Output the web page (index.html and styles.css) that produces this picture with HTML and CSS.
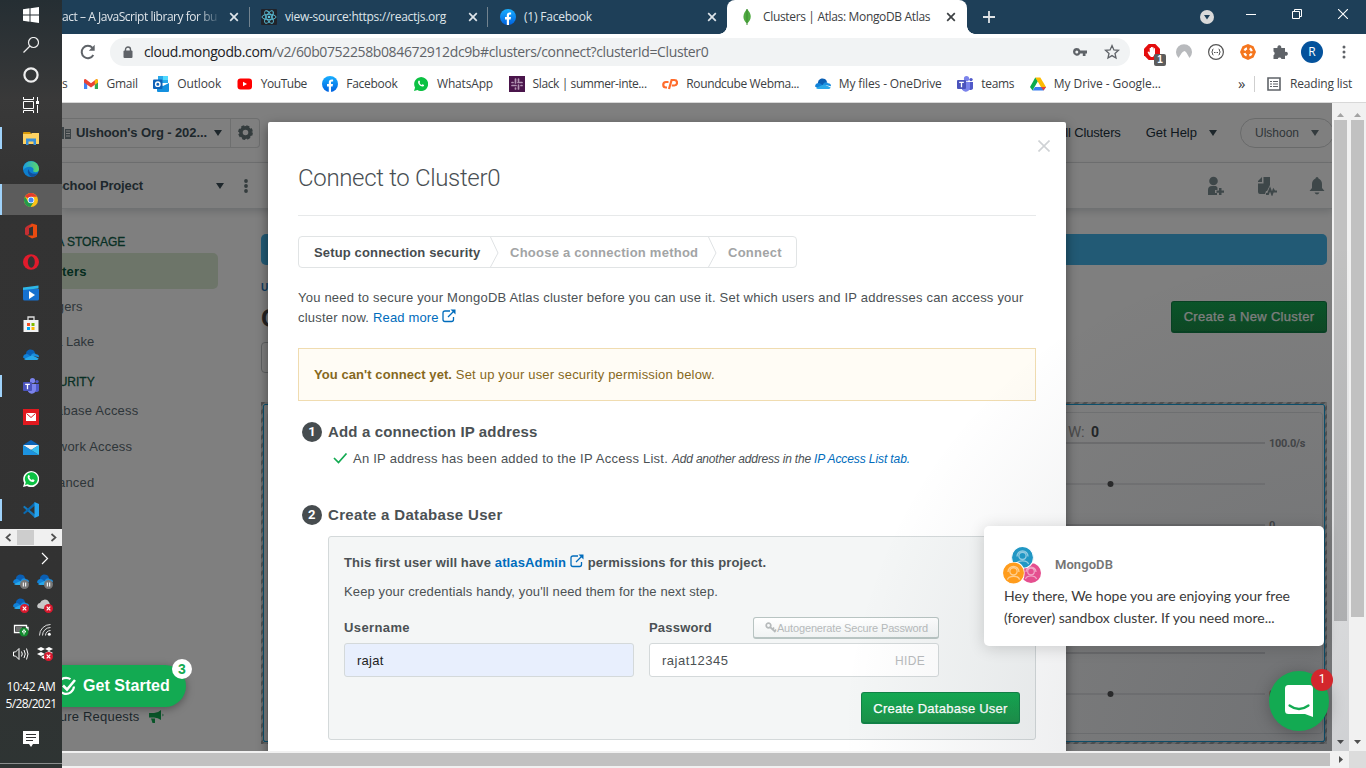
FILE: index.html
```html
<!DOCTYPE html>
<html lang="en">
<head>
<meta charset="utf-8">
<title>Clusters | Atlas: MongoDB Atlas</title>
<link rel="stylesheet" href="styles.css">
</head>
<body>
<svg class="defs" aria-hidden="true">
  <defs>
    <linearGradient id="edgeG" x1="0" y1="0" x2="1" y2="0"><stop offset="0" stop-color="#1b9de2"/><stop offset="1" stop-color="#5fdc62"/></linearGradient>
    <linearGradient id="fbG" x1="0" y1="0" x2="0" y2="1"><stop offset="0" stop-color="#19afff"/><stop offset="1" stop-color="#0062e0"/></linearGradient>
    <symbol id="fb" viewBox="0 0 16 16"><circle cx="8" cy="8" r="8" fill="url(#fbG)"/><path d="M6.8 16v-5.6H5V8h1.8V6.400c0-2 1-3 2.900-3h1.400v2.100h-1c-.8 0-1.100.4-1.100 1.100V8H11l-.4 2.400H9V16z" fill="#fff"/></symbol>
    <symbol id="x" viewBox="0 0 10 10"><path d="M1.200 1.200l7.600 7.600M8.800 1.200L1.200 8.800" stroke="currentColor" stroke-width="1.700" fill="none"/></symbol>
    <symbol id="cloud" viewBox="0 0 16 16"><path d="M3 8A4.600 4.600 0 0 1 12 6l-3 5z" fill="#0a5fb4"/><path d="M0 10.500a3.500 3.500 0 0 1 5-3.200L11 12H2.500z" fill="#1181d8"/><path d="M8 8.500C9 6 12 5.500 13 7.300a2.900 2.900 0 0 1 3 3z" fill="#1a8ee0"/><path d="M1 12L9 8.300l6.700 3.200c-.5 1.300-1.500 1.500-2.700 1.500H3.500A3 3 0 0 1 1 12z" fill="#28a8ea"/></symbol>
    <symbol id="wa" viewBox="0 0 16 16"><path d="M0 16l1.200-4A8 8 0 1 1 4 14.900z" fill="var(--ring,#0cc143)"/><path d="M2 14l.8-2.700A6.500 6.500 0 1 1 4.800 13.300z" fill="#0cc143"/><path d="M5.300 4.200c.5-.4 1-.1 1.200.4l.4 1c.1.500-.6.9-.5 1.200.5 1 1.300 1.700 2.400 2.200.4.1.7-.8 1.200-.7l1.400.7c.4.2-.1 1.400-.7 1.700-1.500.8-3.700-.6-4.700-1.800C4.700 7.400 4.100 5.200 5.300 4.200z" fill="#fff"/></symbol>
    <symbol id="teams" viewBox="0 0 16 16"><circle cx="9.500" cy="2.700" r="2.600" fill="#7b83eb"/><circle cx="14" cy="3.600" r="1.700" fill="#5059c9"/><path d="M11 6h5v5a2.500 2.500 0 0 1-5 1z" fill="#5059c9"/><path d="M5 6h8v5.500a4.300 4.300 0 0 1-8 2z" fill="#7b83eb"/><rect y="4" width="9" height="9" rx="1" fill="#4b53bc"/><path d="M2.200 6.300h4.600M4.500 6.300v5" stroke="#fff" stroke-width="1.300"/></symbol>
    <symbol id="ext" viewBox="0 0 14 14"><path d="M8 2H3Q1 2 1 4v6.500q0 2 2 2h6.500q2 0 2-2V8M6 8l6-6" fill="none" stroke="currentColor" stroke-width="1.300"/><path d="M8.500.5h5v5z" fill="currentColor"/></symbol>
    <symbol id="pause" viewBox="0 0 10 10"><circle cx="5" cy="5" r="5" fill="#777"/><path d="M3.700 2.800v4.400M6.300 2.800v4.400" stroke="#fff" stroke-width="1.200"/></symbol>
    <symbol id="err" viewBox="0 0 10 10"><circle cx="5" cy="5" r="5" fill="#d9182d"/><path d="M3 3l4 4M7 3L3 7" stroke="#fff" stroke-width="1.300"/></symbol>
    <symbol id="man" viewBox="0 0 20 20"><circle cx="10" cy="10" r="10"/><circle cx="10" cy="8.500" r="3.300" fill="none" stroke="#fff" stroke-opacity=".5" stroke-width="1.200"/><path d="M5 9a5 5 0 0 1 10 0M4.500 16c1-4 10-4 11 0" fill="none" stroke="#fff" stroke-opacity=".5" stroke-width="1.200"/></symbol>
    <pattern id="hatch" width="6" height="6" patternUnits="userSpaceOnUse" patternTransform="rotate(45)"><rect width="6" height="6" fill="#d8d8d8"/><rect width="3" height="6" fill="#a2a2a2"/></pattern>
  </defs>
</svg>
<div class="screen">
  <aside class="taskbar">
    <div class="sys">
      <span><svg width="16" height="16"><path d="M0 2.300L6.500 1.300v6.200H0zM7.500 1.200L16 0v7.500H7.500zM0 8.500h6.500v6.200L0 13.700zM7.500 8.500H16V16l-8.500-1.200z" fill="#fff"/></svg></span>
      <span><svg width="16" height="16"><circle cx="10.500" cy="5.500" r="5" fill="none" stroke="#eee" stroke-width="1.200"/><path d="M7 9L.5 15.500" stroke="#eee" stroke-width="1.300"/></svg></span>
      <span><svg width="16" height="16"><circle cx="8" cy="8" r="6.600" fill="none" stroke="#eee" stroke-width="2.200"/></svg></span>
      <span><svg width="16" height="16"><path d="M.5 0v2.500h10V0M.5 16v-2.500h10V16M.5 4.500h10v7H.5zM14.500 0v4M14.500 8v8" fill="none" stroke="#fff"/><path d="M13 4h3v3h-3z" fill="#fff"/></svg></span>
    </div>
    <div class="apps">
      <span class="open"><svg width="16" height="16"><path d="M0 3q0-1 1-1h6l1.500 2H0z" fill="#d99a0b"/><path d="M0 4h8l1-1h7v11H0z" fill="#fdd263"/><path d="M3 8.500h10V15h-2.500v-3.500h-5V15H3z" fill="#3a8fd9"/></svg></span>
      <span><svg width="16" height="16"><circle cx="8" cy="8" r="8" fill="#0d7fcf"/><path d="M.3 6A8 8 0 0 1 16 8c0 4-5.500 3.600-6 2 1-1 .8-3.600-2-4.100C5 5.500 2 6.500.3 9z" fill="url(#edgeG)"/><path d="M5.600 8C3.500 11 6 15 9 15.900c3-.4 5-2 6-4-4 2-9 .5-9.400-3.900z" fill="#11509c"/></svg></span>
      <span class="open active"><svg width="14" height="14"><circle cx="7" cy="7" r="7" fill="#fbc116"/><path d="M7 7L1 3.400A7 7 0 0 1 13.100 3.800H7z" fill="#e33b2e"/><path d="M.9 3.500A7 7 0 0 0 6.500 14L10 8.600 7 7 4 8.600z" fill="#249a4b"/><circle cx="7" cy="7" r="3.300" fill="#fff"/><circle cx="7" cy="7" r="2.500" fill="#4285f4"/></svg></span>
      <span><svg width="14" height="16"><path d="M3 3l5-2.500v3.300L5 5v6l-2 1.500L1 11.500V5z" fill="#c52e32"/><path d="M8 .5l5 1.500v12l-5 1.500-5-3h6V3.600L5 4.500z" fill="#ea4b10"/></svg></span>
      <span><svg width="16" height="16"><ellipse cx="8" cy="8" rx="8" ry="7.800" fill="#e11b2c"/><ellipse cx="8.300" cy="8" rx="3.500" ry="5.700" fill="#343434"/></svg></span>
      <span><svg width="16" height="16"><path d="M0 4h16v10q0 1.500-1.500 1.500h-13Q0 15.500 0 14z" fill="#1670cf"/><path d="M0 2.500L15.500.5v3L0 5z" fill="#2eb7e8"/><path d="M6 6l6 4-6 4z" fill="#fff"/></svg></span>
      <span><svg width="16" height="16"><path d="M5 4V1h6v3" stroke="#ddd" fill="none" stroke-width="1.300"/><path d="M.5 4h15v12H.5z" fill="#f2f2f2"/><path d="M4 7h3v3H4z" fill="#f25022"/><path d="M8.500 7h3v3h-3z" fill="#7fba00"/><path d="M4 11h3v3H4z" fill="#00a4ef"/><path d="M8.500 11h3v3h-3z" fill="#ffb900"/></svg></span>
      <span><svg width="16" height="16"><use href="#cloud"/></svg></span>
      <span class="open"><svg width="16" height="16"><use href="#teams"/></svg></span>
      <span><svg width="16" height="16"><path d="M0 0h16v16H0z" fill="#e1191f"/><path d="M3 4h10v8H3z" fill="#fff"/><path d="M3.500 4.500L8 8.500l4.500-4" stroke="#e1191f" fill="none"/></svg></span>
      <span><svg width="16" height="16"><path d="M0 5l8-5 8 5v4H0z" fill="#0a62b5"/><path d="M0 5h16L8 10z" fill="#f3f3f3"/><path d="M0 5l16 10H0z" fill="#1c93e0"/><path d="M16 5v10L8 10z" fill="#38bff0"/></svg></span>
      <span><svg width="16" height="16" class="ringed"><use href="#wa"/></svg></span>
      <span class="open"><svg width="16" height="16"><path d="M0 5l1.500-1.200L12 12.500V16z" fill="#1379bd"/><path d="M0 11l1.500 1.200L12 3.500V0z" fill="#0a69b0"/><path d="M11.500 0L16 2v12l-4.500 2z" fill="#27a4ee"/></svg></span>
    </div>
    <div class="tscroll"><svg width="62" height="17"><path d="M17 1h17v15H17z" fill="#cdcdcd"/><path d="M10.500 5L6.500 8.500l4 3.500M51.500 5l4 3.500-4 3.500" fill="none" stroke="#505050" stroke-width="1.700"/></svg></div>
    <div class="tray">
      <i></i><span><svg width="16" height="16"><path d="M5 3l5.500 5.500L5 14" fill="none" stroke="#fff" stroke-width="1.200"/></svg></span>
      <span><svg width="16" height="16"><use href="#cloud" y="-2" width="16" height="16"/><use href="#pause" x="7" y="6" width="9" height="9"/></svg></span>
      <span><svg width="16" height="16"><use href="#cloud" y="-2" width="16" height="16"/><use href="#pause" x="7" y="6" width="9" height="9"/></svg></span>
      <span><svg width="16" height="16"><use href="#cloud" y="-2" width="16" height="16"/><use href="#err" x="7" y="6" width="9" height="9"/></svg></span>
      <span><svg width="16" height="16"><path d="M1 10a3 3 0 0 1 2-5 5 5 0 0 1 9-1l2 5-8 2z" fill="#c8c8c8"/><use href="#err" x="7" y="6" width="9" height="9"/></svg></span>
      <span><svg width="16" height="16"><path d="M1.500 3.500h12v7h-12zM14 5.500h1v3" fill="none" stroke="#fff" stroke-width="1.300"/><path d="M3 5h6v4H3z" fill="#fff" fill-opacity=".3"/><circle cx="11" cy="10" r="4.500" fill="#138a2e"/><path d="M11 12.500v-2M11 7.500l1.800 2.500h-3.600z" stroke="#fff" fill="none"/></svg></span>
      <span><svg width="16" height="16"><path d="M2.500 13.500A11 11 0 0 1 13.500 2.500M5.500 13.500A8 8 0 0 1 13.500 5.500M8.500 13.500a5 5 0 0 1 5-5" fill="none" stroke="#ddd"/><circle cx="12.300" cy="12.300" r="1.500" fill="#fff"/></svg></span>
      <span><svg width="16" height="16"><path d="M.5 6h2L6 2.500v11L2.500 10h-2zM8.500 5.500q1.500 2.500 0 5M11 4q2.500 4 0 8M13.500 2.500q3 5.500 0 11" fill="none" stroke="#fff"/></svg></span>
      <span><svg width="16" height="16"><path d="M4 1l4 2-4 2-4-2zM12 1l4 2-4 2-4-2zM4 6l4 2-4 2-4-2zM12 5l4 2-4 2-4-2zM4 11l4-2 2 2-3 2z" fill="#fff"/><use href="#err" x="7" y="6" width="9" height="9"/></svg></span>
    </div>
    <div class="clock"><span class="time">10:42 AM</span><span class="date">5/28/2021</span></div>
    <div class="notify"><svg width="16" height="16"><path d="M0 0h16v13h-6l-2 3-2-3H0z" fill="#fff"/><path d="M3 3.500h10M3 6.500h10M3 9.500h7" stroke="#333"/></svg></div>
  </aside>

  <main class="browser">
    <div class="tabs">
      <div class="tab first"><span class="tt t1">act – A JavaScript library for bu</span><svg width="10" height="10"><use href="#x"/></svg></div>
      <div class="tab"><svg width="16" height="16"><rect width="16" height="16" rx="1" fill="#20232a"/><g fill="none" stroke="#5cc3dc" stroke-width=".9"><ellipse cx="8" cy="8" rx="7" ry="2.700"/><ellipse cx="8" cy="8" rx="7" ry="2.700" transform="rotate(60 8 8)"/><ellipse cx="8" cy="8" rx="7" ry="2.700" transform="rotate(120 8 8)"/></g><circle cx="8" cy="8" r="1.300" fill="#5cc3dc"/></svg><span class="tt t2">view-source:https://reactjs.org</span><svg width="10" height="10"><use href="#x"/></svg></div>
      <div class="tab"><svg width="16" height="16"><use href="#fb"/></svg><span class="tt t3">(1) Facebook</span><svg width="10" height="10"><use href="#x"/></svg></div>
      <div class="tab current"><svg width="16" height="16"><path d="M8 0c5 5 5 10.500 0 14.500C3 10.500 3.500 5 8 0z" fill="#4faa41"/><path d="M8 0v16" stroke="#3d8c33"/></svg><span class="tt t4">Clusters | Atlas: MongoDB Atlas</span><svg width="10" height="10"><use href="#x"/></svg></div>
      <div class="plus"><svg width="12" height="12"><path d="M6 0v12M0 6h12" stroke="#dfe3e6" stroke-width="1.800"/></svg></div>
      <div class="win">
        <svg width="14" height="14"><circle cx="7" cy="7" r="7" fill="#dadada"/><path d="M4 5h6l-3 4.500z" fill="#1e3f58"/></svg>
        <svg class="w1" width="10" height="10"><path d="M0 4.500h10" stroke="#fff"/></svg>
        <svg class="w2" width="10" height="10"><path d="M.5 2.500h7v7h-7zM2.500 2.500v-2h7v7h-2" fill="none" stroke="#fff"/></svg>
        <svg class="w3" width="10" height="10"><path d="M0 0l10 10M10 0L0 10" stroke="#fff" stroke-width="1.100"/></svg>
      </div>
    </div>
    <div class="toolbar">
      <svg class="reload" width="16" height="16"><path d="M13.300 11A6.200 6.200 0 1 1 12.500 3.800" fill="none" stroke="#5f6368" stroke-width="2"/><path d="M14.700.8v6H8.800z" fill="#5f6368"/></svg>
      <div class="omni">
        <svg width="10" height="13"><path d="M2.500 5V3.500a2.500 2.500 0 0 1 5 0V5" fill="none" stroke="#5f6368" stroke-width="1.400"/><rect x=".5" y="4.500" width="9" height="7.500" rx="1" fill="#5f6368"/></svg>
        <span class="url"><b>cloud.mongodb.com</b>/v2/60b0752258b084672912dc9b#clusters/connect?clusterId=Cluster0</span>
        <span class="cell"><svg width="14" height="8"><path d="M3.800 0a3.800 3.800 0 0 1 3.500 2.400H14v3h-1.500V8H9.800V5.400H7.300A3.800 3.800 0 1 1 3.800 0zm0 2.400a1.500 1.500 0 1 0 0 3 1.500 1.500 0 0 0 0-3z" fill="#5f6368" fill-rule="evenodd"/></svg></span>
        <span class="cell"><svg width="16" height="16"><path d="M8 1.600l1.900 4.300 4.600.4-3.500 3.100 1 4.600L8 11.600 4 14l1-4.600L1.500 6.300l4.600-.4z" fill="none" stroke="#5f6368" stroke-width="1.300"/></svg></span>
      </div>
      <div class="exts">
        <span class="cell ad"><svg width="16" height="16"><path d="M4.700 0h6.600L16 4.700v6.600L11.300 16H4.700L0 11.300V4.700z" fill="#e40d0d"/><path d="M5 11L3.500 8l1-.5 1.200 1V4h1.200v3V3h1.300v4V3.200h1.300V7l.3-2.800h1.200V10l-2 3H7z" fill="#fff"/></svg><em>1</em></span>
        <span class="cell"><svg width="16" height="16"><path d="M2.500 14A8 8 0 1 1 13.500 14L10.500 8.800 8.800 7 7 7.800 5.700 9z" fill="#b8babd"/></svg></span>
        <span class="cell"><svg width="16" height="16"><circle cx="8" cy="8" r="7.400" fill="none" stroke="#555" stroke-width="1.200"/><path d="M5.500 5Q4 5 4.500 7L3.700 8l.8 1Q4 11 5.500 11M10.500 5q1.500 0 1 2l.8 1-.8 1q.5 2-1 2" fill="none" stroke="#555"/><path d="M6 8.500h1M7.500 8.500h1M9 8.500h1" stroke="#555"/></svg></span>
        <span class="cell"><svg width="16" height="16"><path d="M8 0l5.500 2.200L16 8l-2.500 5.500L8 16l-5.500-2.500L0 8l2.500-5.800z" fill="#f5761e"/><circle cx="8" cy="8" r="3.800" fill="none" stroke="#fff" stroke-width="2.200" stroke-dasharray="3.200 2.768" transform="rotate(20 8 8)"/></svg></span>
        <span class="cell"><svg width="16" height="16"><path d="M1.500 4h4a2 2 0 1 1 3.700 0H13v4a2 2 0 1 1 0 3.600V15H9.500a2 2 0 0 0-3.800 0H1.500v-3.800a2 2 0 0 0 0-3.600z" fill="#5f6368"/></svg></span>
        <span class="cell"><i class="avatar">R</i></span>
        <span class="cell"><svg width="4" height="14"><g fill="#5f6368"><circle cx="2" cy="2" r="1.500"/><circle cx="2" cy="7" r="1.500"/><circle cx="2" cy="12" r="1.500"/></g></svg></span>
      </div>
    </div>
    <div class="bookmarks">
      <span class="bm b0">s</span>
      <span class="bm b1"><svg width="16" height="16"><path d="M1 4.500V13h3.200V8z" fill="#4285f4"/><path d="M15 4.500V13h-3.200V8z" fill="#34a853"/><path d="M1 3.500L2.500 3 8 7.300 13.500 3 15 4v2.500L8 11.500 1 6.500z" fill="#ea4335"/><path d="M11.800 4.300L13.500 3 15 4v2.500l-3.200 2.300z" fill="#fbbc04"/></svg>Gmail</span>
      <span class="bm b2"><svg width="16" height="16"><path d="M5 0h10v7H5z" fill="#28a8ea"/><path d="M10 0h5v4h-5z" fill="#50d9ff"/><path d="M4 7l6 3 6-3v8q0 1-1 1H5q-1 0-1-1z" fill="#1490df"/><rect y="3.500" width="9.500" height="9.500" rx="1" fill="#0f62b8"/><circle cx="4.800" cy="8.200" r="2.200" fill="none" stroke="#fff" stroke-width="1.400"/></svg>Outlook</span>
      <span class="bm b3"><svg width="16" height="16"><rect x=".5" y="2.500" width="14.500" height="11" rx="3" fill="#f00"/><path d="M6 5.700v4.600L10 8z" fill="#fff"/></svg>YouTube</span>
      <span class="bm b4"><svg width="16" height="16"><use href="#fb"/></svg>Facebook</span>
      <span class="bm b5"><svg width="14" height="14" class="wide"><use href="#wa"/></svg>WhatsApp</span>
      <span class="bm b6"><svg width="16" height="16"><path d="M0 0h16v16H0z" fill="#4a154b"/><g stroke="#b295b3" stroke-width="1.700" stroke-linecap="round"><path d="M6.500 3v4M9.500 9v4M9 6.500h4M3 9.500h4M9.500 3v2M6.500 12v1M3 6.500h1M12 9.500h1"/></g></svg>Slack | summer-inte...</span>
      <span class="bm b7"><svg width="16" height="16"><path d="M6.500 6H4a2.700 2.700 0 0 0 0 5.500h1M7 13l2.600-9h2.700a2.700 2.700 0 0 1 0 5.500H9.800" fill="none" stroke="#ff6c2c" stroke-width="2.200"/></svg>Roundcube Webma...</span>
      <span class="bm b8"><svg width="16" height="16"><use href="#cloud"/></svg>My files - OneDrive</span>
      <span class="bm b9"><svg width="16" height="16"><use href="#teams"/></svg>teams</span>
      <span class="bm b10"><svg width="16" height="16"><path d="M5.300 1.500L0 11l2.500 3.500L8 5z" fill="#0aab4b"/><path d="M5.300 1.500h5L16 11h-5z" fill="#fdbc02"/><path d="M5 11h11l-2.500 3.500h-11z" fill="#3a7ef0"/><path d="M11 11h5l-2.500 3.500z" fill="#ea4335"/></svg>My Drive - Google...</span>
      <span class="more">»</span>
      <span class="bm reading"><svg width="14" height="14"><path d="M1 1h12v12H1z" fill="none" stroke="#5f6368" stroke-width="1.600"/><path d="M3 4.500h2M6 4.500h5M3 7h2M6 7h5M3 9.500h2M6 9.500h5" stroke="#5f6368" stroke-width="1.200"/></svg>Reading list</span>
    </div>

    <div class="view">
      <div class="page">
        <div class="nav">
          <div class="org"><svg class="bld" width="11" height="13"><path d="M0 1h4v12H0zM5 3h6v10H5z" fill="#76848a"/><path d="M6 5h4M6 7.500h4M6 10h4" stroke="#fff"/></svg><b class="orgname">Ulshoon's Org - 202...</b><i class="tri"></i></div>
          <div class="gear"><svg width="15" height="15"><circle cx="7.500" cy="7.500" r="4.600" fill="none" stroke="#68787b" stroke-width="3.600"/><circle cx="7.500" cy="7.500" r="6.500" fill="none" stroke="#68787b" stroke-width="1.800" stroke-dasharray="3.100 2.005"/></svg></div>
          <div class="navr"><span class="all">All Clusters</span><span class="help">Get Help</span><i class="tri"></i><span class="user">Ulshoon<i class="tri"></i></span></div>
        </div>
        <div class="project">
          <b>School Project</b><i class="tri"></i><svg class="kebab" width="4" height="14"><g fill="#68787b"><circle cx="2" cy="2" r="1.900"/><circle cx="2" cy="7" r="1.900"/><circle cx="2" cy="12" r="1.900"/></g></svg>
          <div class="acts">
            <svg width="18" height="20"><g fill="#7c8e92"><circle cx="6.500" cy="5" r="4.300"/><path d="M1 19v-5q0-4 4-4h4l1.500 1.500V14H8v3h2v2zM12 12h2.500v2.500H17v2.300h-2.500V19H12v-2.200H9.500v-2.300H12z"/></g></svg>
            <svg width="20" height="20"><g fill="#7c8e92"><path d="M1 5l4-4v5H1zM6.500 1H13v8l-3 6H9l-1 3H3q-2 0-2-2V7.500h5.500z"/></g><path d="M9 18h2l2-5 2 5 1.500-4 1 1.500H20" fill="none" stroke="#7c8e92" stroke-width="2"/></svg>
            <svg width="16" height="20"><path d="M8 1q1.500 0 1.500 1.500Q13 4 13 8v4l2.500 3H.5L3 12V8q0-4 3.500-5.500Q6.500 1 8 1zM5.500 16.500h5Q9.500 18.500 8 18.500t-2.500-2z" fill="#7c8e92"/></svg>
          </div>
        </div>
        <div class="body">
          <div class="side">
            <h5>DATA STORAGE</h5>
            <a class="on">Clusters</a><a>Triggers</a><a>Data Lake</a>
            <h5 class="sec">SECURITY</h5>
            <a>Database Access</a><a>Network Access</a><a>Advanced</a>
            <a class="req">Feature Requests<svg width="17" height="15"><path d="M1 4h5q4 0 7-3v10q-3-2.500-7-2.500H1zM3 9.500h4V14H4.500zM14.500 4.500q2 1.500 0 3z" fill="#13aa52"/></svg></a>
          </div>
          <div class="content">
            <div class="banner"></div>
            <div class="crumb">U</div>
            <div class="head"><h1>C</h1><button class="green new">Create a New Cluster</button></div>
            <div class="find"></div>
            <svg class="card" width="1066" height="342">
              <rect x="1" y="1" width="1064" height="340" fill="none" stroke="url(#hatch)" stroke-width="2"/>
              <rect x="2.500" y="2.500" width="1061" height="337" rx="2" fill="#fff" stroke="#16a2dc" stroke-width="1.100"/>
              <rect x="6.500" y="10.500" width="1055" height="321" rx="3" fill="none" stroke="#e2e4e6"/>
              <g stroke="#dcdddf" stroke-width="2"><path d="M300 41h704M300 123h704M300 251h704"/><path d="M300 82h704M300 292h704" stroke="#e8e8ea"/></g>
              <circle cx="849.500" cy="82" r="3" fill="#555"/><circle cx="849.500" cy="292" r="3" fill="#555"/>
              <g class="chart"><text x="807" y="34.500" class="w">W:</text><text x="830" y="34.500" class="wv">0</text><text x="1008" y="44.500">100.0/s</text><text x="1008" y="127">0</text><text x="1008" y="296">0</text></g>
            </svg>
          </div>
        </div>
        <div class="shade"></div>
        <section class="modal">
          <svg class="close" width="12" height="12"><path d="M.5.5l11 11M11.500.5l-11 11" stroke="#cfd2d5" stroke-width="1.600"/></svg>
          <h2>Connect to Cluster0</h2>
          <div class="steps"><span class="s1">Setup connection security</span><svg width="9" height="30"><path d="M.5 0l7.500 16-7.500 14" fill="none" stroke="#dfe2e4"/></svg><span class="s2">Choose a connection method</span><svg width="9" height="30"><path d="M.5 0l7.500 16-7.500 14" fill="none" stroke="#dfe2e4"/></svg><span class="s3">Connect</span></div>
          <p class="intro">You need to secure your MongoDB Atlas cluster before you can use it. Set which users and IP addresses can access your<br>cluster now. <a>Read more <svg width="14" height="14"><use href="#ext"/></svg></a></p>
          <div class="alert"><b>You can't connect yet.</b> Set up your user security permission below.</div>
          <h3 class="h1st"><i>1</i><span>Add a connection IP address</span></h3>
          <p class="done"><svg width="15" height="12"><path d="M1 5l4.500 4.500L13.500.5" fill="none" stroke="#13aa52" stroke-width="1.700"/></svg><span class="dtext">An IP address has been added to the IP Access List.</span><em>Add another address in the <a>IP Access List tab.</a></em></p>
          <h3 class="h2nd"><i>2</i><span>Create a Database User</span></h3>
          <div class="form">
            <p class="lead">This first user will have <a>atlasAdmin <svg width="14" height="14"><use href="#ext"/></svg></a> permissions for this project.</p>
            <p class="keep">Keep your credentials handy, you'll need them for the next step.</p>
            <div class="fields">
              <div class="field"><div class="lab"><b class="lu">Username</b></div><div class="input filled"><span class="v1">rajat</span></div></div>
              <div class="field"><div class="lab"><b class="lp">Password</b><button class="auto"><svg width="12" height="11"><g fill="none" stroke="#b6babb" stroke-width="1.700"><circle cx="3.500" cy="3.500" r="2.300"/><path d="M5 5l5.500 5M7.500 7.500l1.500-2M9.500 9.500l1.500-2"/></g></svg>Autogenerate Secure Password</button></div><div class="input"><span class="v2">rajat12345</span><span class="hide">HIDE</span></div></div>
            </div>
            <div class="submit"><button class="green create">Create Database User</button></div>
          </div>
        </section>
        <div class="started"><svg width="18" height="20"><path d="M12.500 3.200A8 8 0 1 0 16 10.500" fill="none" stroke="#fff" stroke-width="2.200"/><path d="M5 9.500l4 4 8-9.500" fill="none" stroke="#fff" stroke-width="2.600"/></svg>Get Started<i>3</i></div>
      </div>
      <div class="bars">
        <svg width="34" height="648"><path d="M0 0h34v648H0z" fill="#f1f1f1"/><path d="M2 17h13v501H2zM19 17h13v497H19z" fill="#c1c1c1"/><path d="M8.500 10l3.500 4H5zM25.500 10l3.500 4h-7z" fill="#a3a3a3"/><path d="M8.500 641L5 637h7zM25.500 641l-3.500-4h7z" fill="#505050"/></svg>
      </div>
    </div>
    <div class="hbar"><svg width="1304" height="17"><path d="M0 0h1287v17H0z" fill="#f1f1f1"/><path d="M0 2h1268v13H0z" fill="#c1c1c1"/><path d="M1281 8.500l-4-3.500v7z" fill="#505050"/><path d="M1287 0h17v17h-17z" fill="#dcdcdc"/></svg></div>
    <div class="haze"></div>
    <div class="chat">
      <div class="who"><svg width="38" height="38"><g fill="#e54f8f"><use href="#man" x="18" y="16" width="20" height="20"/></g><g fill="#2197c4" stroke="#fff" stroke-width="1"><use href="#man" x="8.500" y="-.5" width="22" height="22"/></g><g fill="#ff9c1c" stroke="#fff" stroke-width="1"><use href="#man" x="-.5" y="15" width="22" height="22"/></g></svg><b>MongoDB</b></div>
      <p><span class="c1">Hey there, We hope you are enjoying your free</span><br><span class="c2">(forever) sandbox cluster. If you need more...</span></p>
    </div>
    <div class="launch"><svg width="28" height="32"><path d="M3.500 0h21q3.500 0 3.500 3.500V32l-8-3H3.500Q0 29 0 25.500v-22Q0 0 3.500 0z" fill="#fff"/><path d="M4.500 20.500q9.500 7 19 0" fill="none" stroke="#13aa52" stroke-width="2.200" stroke-linecap="round"/></svg><i>1</i></div>
  </main>
</div>
</body>
</html>
```
FILE: styles.css
```css
*{box-sizing:border-box}
body{margin:0;width:1366px;height:768px;overflow:hidden;font:13px/20px "Liberation Sans",Arial,sans-serif;color:#4b5154}
.defs{position:absolute;width:0;height:0}
svg{display:block;flex:none}
h1,h2,h3,h5,p{margin:0}
i{font-style:normal}
button{border:0;padding:0;font:inherit;display:flex;align-items:center;justify-content:center}
.screen{display:flex;height:768px}

.taskbar{width:62px;flex:none;display:flex;flex-direction:column;background:linear-gradient(#252e33,#393939 13%,#333 25%,#323232 75%,#2e3433);color:#fff}
.sys{height:122px}
.sys span{display:flex;height:30px;align-items:center;justify-content:center}
.apps{height:407px}
.apps span{display:flex;height:31px;align-items:center;justify-content:center;position:relative}
.apps .active{background:#5c5c5c}
.apps .open::before{content:"";position:absolute;left:0;top:5px;width:2px;height:22px;background:#9fd2fa}
.apps .active::before{top:0;height:31px}
.ringed{--ring:#fff}
.tscroll{height:17px;background:#f0f0f0}
.tray{display:grid;grid-template-columns:24px 24px;grid-auto-rows:24px;padding-left:9px;height:124px}
.tray span{display:flex;align-items:center;justify-content:center}
.clock{height:52px;padding-top:8px;display:flex;flex-direction:column;align-items:center;font:12px/17px "Open Sans",sans-serif}
.time{letter-spacing:-.39px}
.date{letter-spacing:-.65px;white-space:nowrap}
.notify{height:42px;display:flex;justify-content:center;padding-top:9px;border-bottom:1px solid #8b8e8e}

.browser{flex:1;min-width:0;display:flex;flex-direction:column;position:relative;background:#fff;font-family:"Open Sans",sans-serif}
.tabs{height:34px;display:flex;background:#1e3f58;color:#dfe5ea;font-size:12px}
.tab{width:239px;flex:none;display:flex;align-items:center;gap:8px;padding:0 10px 0 12px;position:relative;white-space:nowrap}
.tab .tt{flex:1}
.tab.first{width:187px;padding-left:0}
.tab.first .tt{overflow:hidden;-webkit-mask:linear-gradient(90deg,#000 85%,transparent);mask:linear-gradient(90deg,#000 85%,transparent)}
.tab.first+.tab::before,.tab.first+.tab::after{content:"";position:absolute;top:7px;width:1px;height:20px;background:#72838f}
.tab.first+.tab::before{left:0}
.tab.first+.tab::after{right:0}
.t1{letter-spacing:-.46px}.t2{letter-spacing:-.28px}.t3{letter-spacing:-.21px}.t4{letter-spacing:-.34px}
.tab.current{width:240px;background:#fff;color:#3c4043;border-radius:8px 8px 0 0;padding:0 11px 0 12px}
.tab.current::before,.tab.current::after{content:"";position:absolute;bottom:0;width:8px;height:8px}
.tab.current::before{left:-8px;background:radial-gradient(circle at 0 0,transparent 7.500px,#fff 8px)}
.tab.current::after{right:-8px;background:radial-gradient(circle at 100% 0,transparent 7.500px,#fff 8px)}
.plus{padding:11px 0 0 16px}
.win{flex:1;display:flex;justify-content:flex-end;padding:10px 18px 0 0}
.w1{margin:0 36px 0 32px}.w2{margin:-1px 36px 0 0}.w3{margin-top:-1px}
.toolbar{height:36px;display:flex;align-items:center}
.reload{margin:0 14px 0 18px}
.omni{width:1020px;height:28px;border-radius:14px;background:#f1f3f4;display:flex;align-items:center;padding:0 2px 0 13px;white-space:nowrap;font-size:14px;color:#5f6368}
.url{flex:1;padding-left:11px;letter-spacing:-.37px}
.url b{font-weight:400;color:#202124}
.cell{width:32px;height:28px;display:flex;align-items:center;justify-content:center;position:relative}
.exts{display:flex;padding-left:6px}
.cell em{position:absolute;left:18px;top:16px;width:12px;height:12px;border-radius:2px;background:#5c5c5c;color:#fff;font:bold 10px/12px "Liberation Sans",sans-serif;text-align:center}
.avatar{width:22px;height:22px;border-radius:50%;background:#04529c;color:#fff;font:12px/22px "Open Sans",sans-serif;text-align:center}
.bookmarks{height:33px;display:flex;align-items:center;gap:15.6px;border-bottom:1px solid #d8d8d8;white-space:nowrap;font-size:12px;color:#3c4043;padding-bottom:4px}
.bm{display:flex;align-items:center;gap:8px;flex:none}
.bm.b0{width:5px}
.b1{letter-spacing:-.31px}.b2{letter-spacing:-.11px}.b3{letter-spacing:-.48px}.b4{letter-spacing:-.3px}.b5{letter-spacing:-.17px}.b6{letter-spacing:-.4px}.b7{letter-spacing:-.36px}.b8{letter-spacing:-.13px}.b9{letter-spacing:-.3px}.b10{letter-spacing:-.06px}
.b5 .wide{margin:0 1px}
.more{margin-left:auto;font-size:15px;margin-right:-7px;padding-bottom:3px}
.reading{letter-spacing:-.19px;border-left:1px solid #cfcfcf;padding-left:12px;margin-right:14px;height:16px;gap:9px}

.view{height:648px;display:flex;flex:none}
.page{width:1270px;height:648px;flex:none;position:relative;overflow:hidden;background:#fff;font-family:"Liberation Sans",Arial,sans-serif}
.bars{width:34px}
.hbar{height:17px}
.tri{width:0;height:0;border:4px solid transparent;border-top:6px solid #3d4f58;border-bottom:0}
.nav{height:60px;display:flex;align-items:center;border-bottom:1px solid #dfe1e2;color:#21313c;white-space:nowrap}
.org,.gear{height:30px;border:1px solid #dcdedf;display:flex;align-items:center}
.org{width:169px;border-left:0}
.orgname{width:138px;padding-left:5px;letter-spacing:-.1px;color:#3d4f58}
.org .bld{margin-left:-2px}
.org .tri{margin-left:5px}
.gear{width:29px;border-left:0;border-radius:0 4px 4px 0;justify-content:center}
.navr{margin-left:auto;display:flex;align-items:center;margin-right:-2px}
.all{letter-spacing:-.15px;margin-right:1px}
.help{margin:0 12px 0 24px}
.user{height:30px;width:94px;margin-left:23px;border:1px solid #d2d4d5;border-radius:15px;padding-left:14px;display:flex;align-items:center;gap:12px;font-size:12px;color:#5f6c72}
.user .tri{border-top-color:#69777c}
.project{height:46px;display:flex;align-items:center;color:#3d4f58;box-shadow:0 3px 7px rgba(20,40,50,.16);border-bottom:1px solid #dfe3e4;position:relative}
.project b{width:153px;margin-left:-8px;white-space:nowrap;letter-spacing:-.15px;padding-top:1px}
.project .tri{margin-left:9px}
.kebab{margin-left:20px}
.acts{margin-left:auto;display:flex;margin-right:7px;gap:32px}
.body{display:flex;height:542px}
.side{width:199px;color:#5d6c74;display:flex;flex-direction:column;position:relative;white-space:nowrap}
.side h5{font:12px/22px "Liberation Sans",sans-serif;color:#116149;margin:22px 0 0 -28px;-webkit-text-stroke:.3px}
.side h5.sec{margin:13px 0 1px -28px;line-height:20px}
.side a{height:36px;line-height:35px;margin-right:43px;letter-spacing:.2px;text-indent:-27px}
.side a:nth-child(3),.side a:nth-child(4){height:35px}
.side a:nth-child(3){text-indent:-28px}
.side a:nth-child(4){text-indent:-27px;letter-spacing:0}
.side a.on{background:#dbebd3;border-radius:0 5px 5px 0;color:#09583d;font-weight:700;text-indent:-29px;letter-spacing:.2px;line-height:37px}
.side a:nth-child(6){text-indent:-27px}
.side a:nth-child(7){text-indent:-25px}
.side a.req{margin-top:197px;display:flex;align-items:center;gap:8px;text-indent:0;margin-left:-29px;color:#3d4f58}
.content{width:1066px;padding-top:25px}
.banner{height:31px;border-radius:5px;background:#44b4ea}
.crumb{font:bold 10px/12px "Liberation Sans",sans-serif;color:#1a78c2;margin-top:17px}
.head{display:flex;justify-content:space-between;height:34px;margin-top:7px}
.head h1{font-size:26px;line-height:35px;color:#494747}
.green{height:32px;border:1px solid #118246;border-bottom-width:2px;border-radius:3px;background:linear-gradient(#13aa52,#1c9149);color:#fff;font-weight:400;-webkit-text-stroke:.25px}
.new{width:156px;letter-spacing:.32px}
.find{height:31px;width:200px;border:1px solid #bfc2c4;border-radius:4px;margin-top:7px}
.card{margin:29px 0 0}
.chart text{font:bold 11px Roboto,sans-serif;fill:#8a8d90;letter-spacing:-.3px}
.chart .w{font:15px Roboto,sans-serif;fill:#999}
.chart .wv{font:bold 14px Roboto,sans-serif;fill:#464c4f}
.shade{position:absolute;inset:0;background:rgba(0,0,0,.5)}

.modal{position:absolute;left:206px;top:19px;width:798px;height:660px;background:#fff;border-radius:2px;padding:41px 30px 0;box-shadow:0 4px 12px rgba(0,0,0,.45)}
.modal a{color:#006cbc}
.modal a svg{display:inline-block;vertical-align:-1px}
.close{position:absolute;right:16px;top:18px}
.modal h2{font:300 24px/31px Roboto,sans-serif;letter-spacing:-.33px;color:#494f53;height:53px;border-bottom:1px solid #e7e9ea}
.steps{width:499px;height:32px;margin-top:20px;border:1px solid #e1e4e5;border-radius:4px;display:flex;align-items:center;font-weight:700;color:#a2a4a5;white-space:nowrap}
.steps span{padding-top:2px}
.s1{color:#464c4f;letter-spacing:.15px;width:191px;padding-left:15px}
.s2{letter-spacing:.24px;width:209px;padding-left:11px}
.s3{letter-spacing:.25px;padding-left:11px}
.intro{margin-top:20px;letter-spacing:.21px;white-space:nowrap}
.intro a{margin-left:0;letter-spacing:.15px}
.alert{height:53px;margin-top:20px;border:1px solid #f0dcb0;background:#fffcf5;color:#86681d;padding:16px 15px 0;letter-spacing:.19px}
.alert b{letter-spacing:.07px}
.modal h3{display:flex;align-items:center;height:24px;font-size:15px;gap:6px;padding-left:4px}
.modal h3 i{width:20px;height:20px;border-radius:50%;background:#464c4f;color:#fff;font:bold 13px/20px Roboto,sans-serif;text-align:center}
.h1st{margin-top:19px;letter-spacing:.14px}
.h2nd{margin-top:34px;letter-spacing:.32px}
.done{margin-top:5px;display:flex;align-items:center;padding-left:35px;white-space:nowrap}
.dtext{letter-spacing:.25px;padding-left:5px;width:324px}
.done em{font-size:12px;letter-spacing:-.2px}
.done a{letter-spacing:-.1px}
.form{margin:9px 0 0 30px;height:204px;border:1px solid #d4d9da;border-radius:3px;background:#f4f6f6;padding:16px 15px 0}
.lead{font-weight:700;letter-spacing:.13px}
.keep{margin-top:9px;letter-spacing:.13px}
.fields{display:flex;gap:15px;margin-top:15px}
.field{width:290px}
.lab{height:22px;display:flex;align-items:center;justify-content:space-between;margin-bottom:4px}
.lu{letter-spacing:.39px}.lp{letter-spacing:.2px}
.auto{width:186px;height:22px;border:1px solid #b8c4c2;border-bottom-width:2px;border-radius:3px;background:linear-gradient(#fff,#f0f3f3);color:#b6babb;font-size:11px;letter-spacing:-.15px;padding-left:1px}
.input{height:34px;border:1px solid #d4d9da;border-radius:3px;background:#fff;padding:2px 13px 0 12px;display:flex;align-items:center;justify-content:space-between}
.filled{background:#e8effd;color:#222}
.v1{letter-spacing:.25px}.v2{letter-spacing:.5px}
.hide{font-size:12px;letter-spacing:.33px;color:#b9bbbd;padding-bottom:1px}
.submit{display:flex;justify-content:flex-end;margin-top:15px}
.create{width:159px;letter-spacing:.25px;padding-top:2px}
.started{position:absolute;left:-8px;top:562px;width:132px;height:42px;border-radius:0 21px 21px 0;background:#13aa52;color:#fff;display:flex;align-items:center;gap:7px;padding-left:4px;font-weight:700;font-size:16px;letter-spacing:.06px;box-shadow:0 2px 8px rgba(0,0,0,.35)}
.started i{position:absolute;right:-6px;top:-6px;width:20px;height:20px;border-radius:50%;background:#fff;color:#13aa52;font:bold 14px/21px "Liberation Sans",sans-serif;text-align:center}

.haze{position:absolute;right:17px;bottom:17px;width:500px;height:500px;background:radial-gradient(ellipse at bottom right,rgba(29,39,54,.16) 0,rgba(29,39,54,0) 72%)}
.chat{position:absolute;left:922px;top:526px;width:340px;height:120px;background:#fff;border-radius:5px;padding:20px 18px;box-shadow:0 2px 16px rgba(0,0,0,.16);font-family:Roboto,sans-serif;color:#3a3a3a;white-space:nowrap}
.who{display:flex;align-items:center;gap:15px;height:39px}
.who svg{margin-left:1px;margin-right:-1px}
.who b{color:#757575;font-size:13px;font-weight:600;padding-bottom:2px;letter-spacing:.07px}
.chat p{font:14px/22px Lato,sans-serif;padding-left:2px}
.launch{position:absolute;left:1207px;top:671px;width:60px;height:60px;border-radius:50%;background:#13aa52;display:flex;align-items:center;justify-content:center;box-shadow:0 2px 16px rgba(0,0,0,.25)}
.launch i{position:absolute;left:42px;top:-2px;width:22px;height:22px;border-radius:50%;background:#d3262c;color:#fff;font:12px/21px Roboto,sans-serif;text-align:center}
```
